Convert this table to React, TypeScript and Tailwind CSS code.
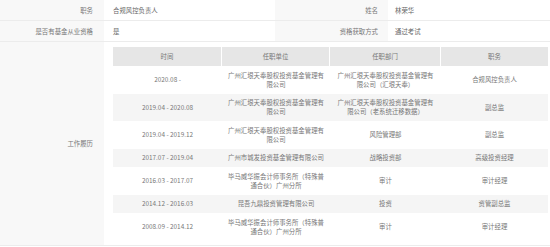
import React from "react";

type Row = { time: string; unit: string[]; dept: string[]; title: string };

const rows: Row[] = [
  { time: "2020.08 -", unit: ["广州汇垠天奉股权投资基金管理有", "限公司"], dept: ["广州汇垠天奉股权投资基金管理有", "限公司（汇垠天奉）"], title: "合规风控负责人" },
  { time: "2019.04 - 2020.08", unit: ["广州汇垠天奉股权投资基金管理有", "限公司"], dept: ["广州汇垠天奉股权投资基金管理有", "限公司（老系统迁移数据）"], title: "副总监" },
  { time: "2019.04 - 2019.12", unit: ["广州汇垠天奉股权投资基金管理有", "限公司"], dept: ["风险管理部"], title: "副总监" },
  { time: "2017.07 - 2019.04", unit: ["广州市城发投资基金管理有限公司"], dept: ["战略投资部"], title: "高级投资经理" },
  { time: "2016.03 - 2017.07", unit: ["毕马威华振会计师事务所（特殊普", "通合伙）广州分所"], dept: ["审计"], title: "审计经理" },
  { time: "2014.12 - 2016.03", unit: ["昆吾九鼎投资管理有限公司"], dept: ["投资"], title: "资管副总监" },
  { time: "2008.09 - 2014.12", unit: ["毕马威华振会计师事务所（特殊普", "通合伙）广州分所"], dept: ["审计"], title: "审计经理" },
];

const Lines = ({ lines }: { lines: string[] }) => (
  <>
    {lines.map((l, i) => (
      <div key={i} className="whitespace-nowrap">
        {l}
      </div>
    ))}
  </>
);

export default function App() {
  return (
    <div
      className="w-[550px] h-[247px] bg-white text-[6.4px] leading-[9px] text-[#777] overflow-hidden"
      style={{ fontFamily: '"Noto Sans CJK SC", "Noto Sans", sans-serif' }}
    >
      <div className="grid grid-cols-[104px_171px_113px_1fr]">
        <div className="h-[21px] bg-[#f8f8f8] border-b border-[#ececec] flex items-center justify-end pr-[11px]">职务</div>
        <div className="h-[21px] border-b border-[#ececec] flex items-center pl-[9px] text-[#666]">合规风控负责人</div>
        <div className="h-[21px] bg-[#f8f8f8] border-b border-[#ececec] flex items-center justify-end pr-[10px]">姓名</div>
        <div className="h-[21px] border-b border-[#ececec] flex items-center pl-[7px] text-[#666]">林荣华</div>

        <div className="h-[21px] bg-[#f8f8f8] border-b border-[#ececec] flex items-center justify-end pr-[11px]">是否有基金从业资格</div>
        <div className="h-[21px] border-b border-[#ececec] flex items-center pl-[9px] text-[#666]">是</div>
        <div className="h-[21px] bg-[#f8f8f8] border-b border-[#ececec] flex items-center justify-end pr-[10px]">资格获取方式</div>
        <div className="h-[21px] border-b border-[#ececec] flex items-center pl-[7px] text-[#666]">通过考试</div>
      </div>

      <div className="grid grid-cols-[104px_1fr] border-b border-[#ececec]">
        <div className="bg-[#f8f8f8] flex items-center justify-end pr-[11px]">工作履历</div>
        <div className="pt-[5px] pb-[4px] pl-[9px] pr-[2px]">
          <div className="grid grid-cols-[109px_108px_111px_1fr] text-center">
            <div className="bg-[#e6e6e6] border-r border-white py-[5px]">时间</div>
            <div className="bg-[#e6e6e6] border-r border-white py-[5px]">任职单位</div>
            <div className="bg-[#e6e6e6] border-r border-white py-[5px]">任职部门</div>
            <div className="bg-[#e6e6e6] py-[5px]">职务</div>
            {rows.map((r, i) => {
              const bg = i % 2 === 1 ? "bg-[#f5f5f5]" : "bg-white";
              return (
                <React.Fragment key={i}>
                  <div className={`${bg} py-[4.75px] flex flex-col items-center justify-center`}>
                    <div className="whitespace-nowrap">{r.time}</div>
                  </div>
                  <div className={`${bg} py-[4.75px] flex flex-col items-center justify-center`}>
                    <Lines lines={r.unit} />
                  </div>
                  <div className={`${bg} py-[4.75px] flex flex-col items-center justify-center`}>
                    <Lines lines={r.dept} />
                  </div>
                  <div className={`${bg} py-[4.75px] flex flex-col items-center justify-center`}>
                    <div className="whitespace-nowrap">{r.title}</div>
                  </div>
                </React.Fragment>
              );
            })}
          </div>
        </div>
      </div>
    </div>
  );
}
